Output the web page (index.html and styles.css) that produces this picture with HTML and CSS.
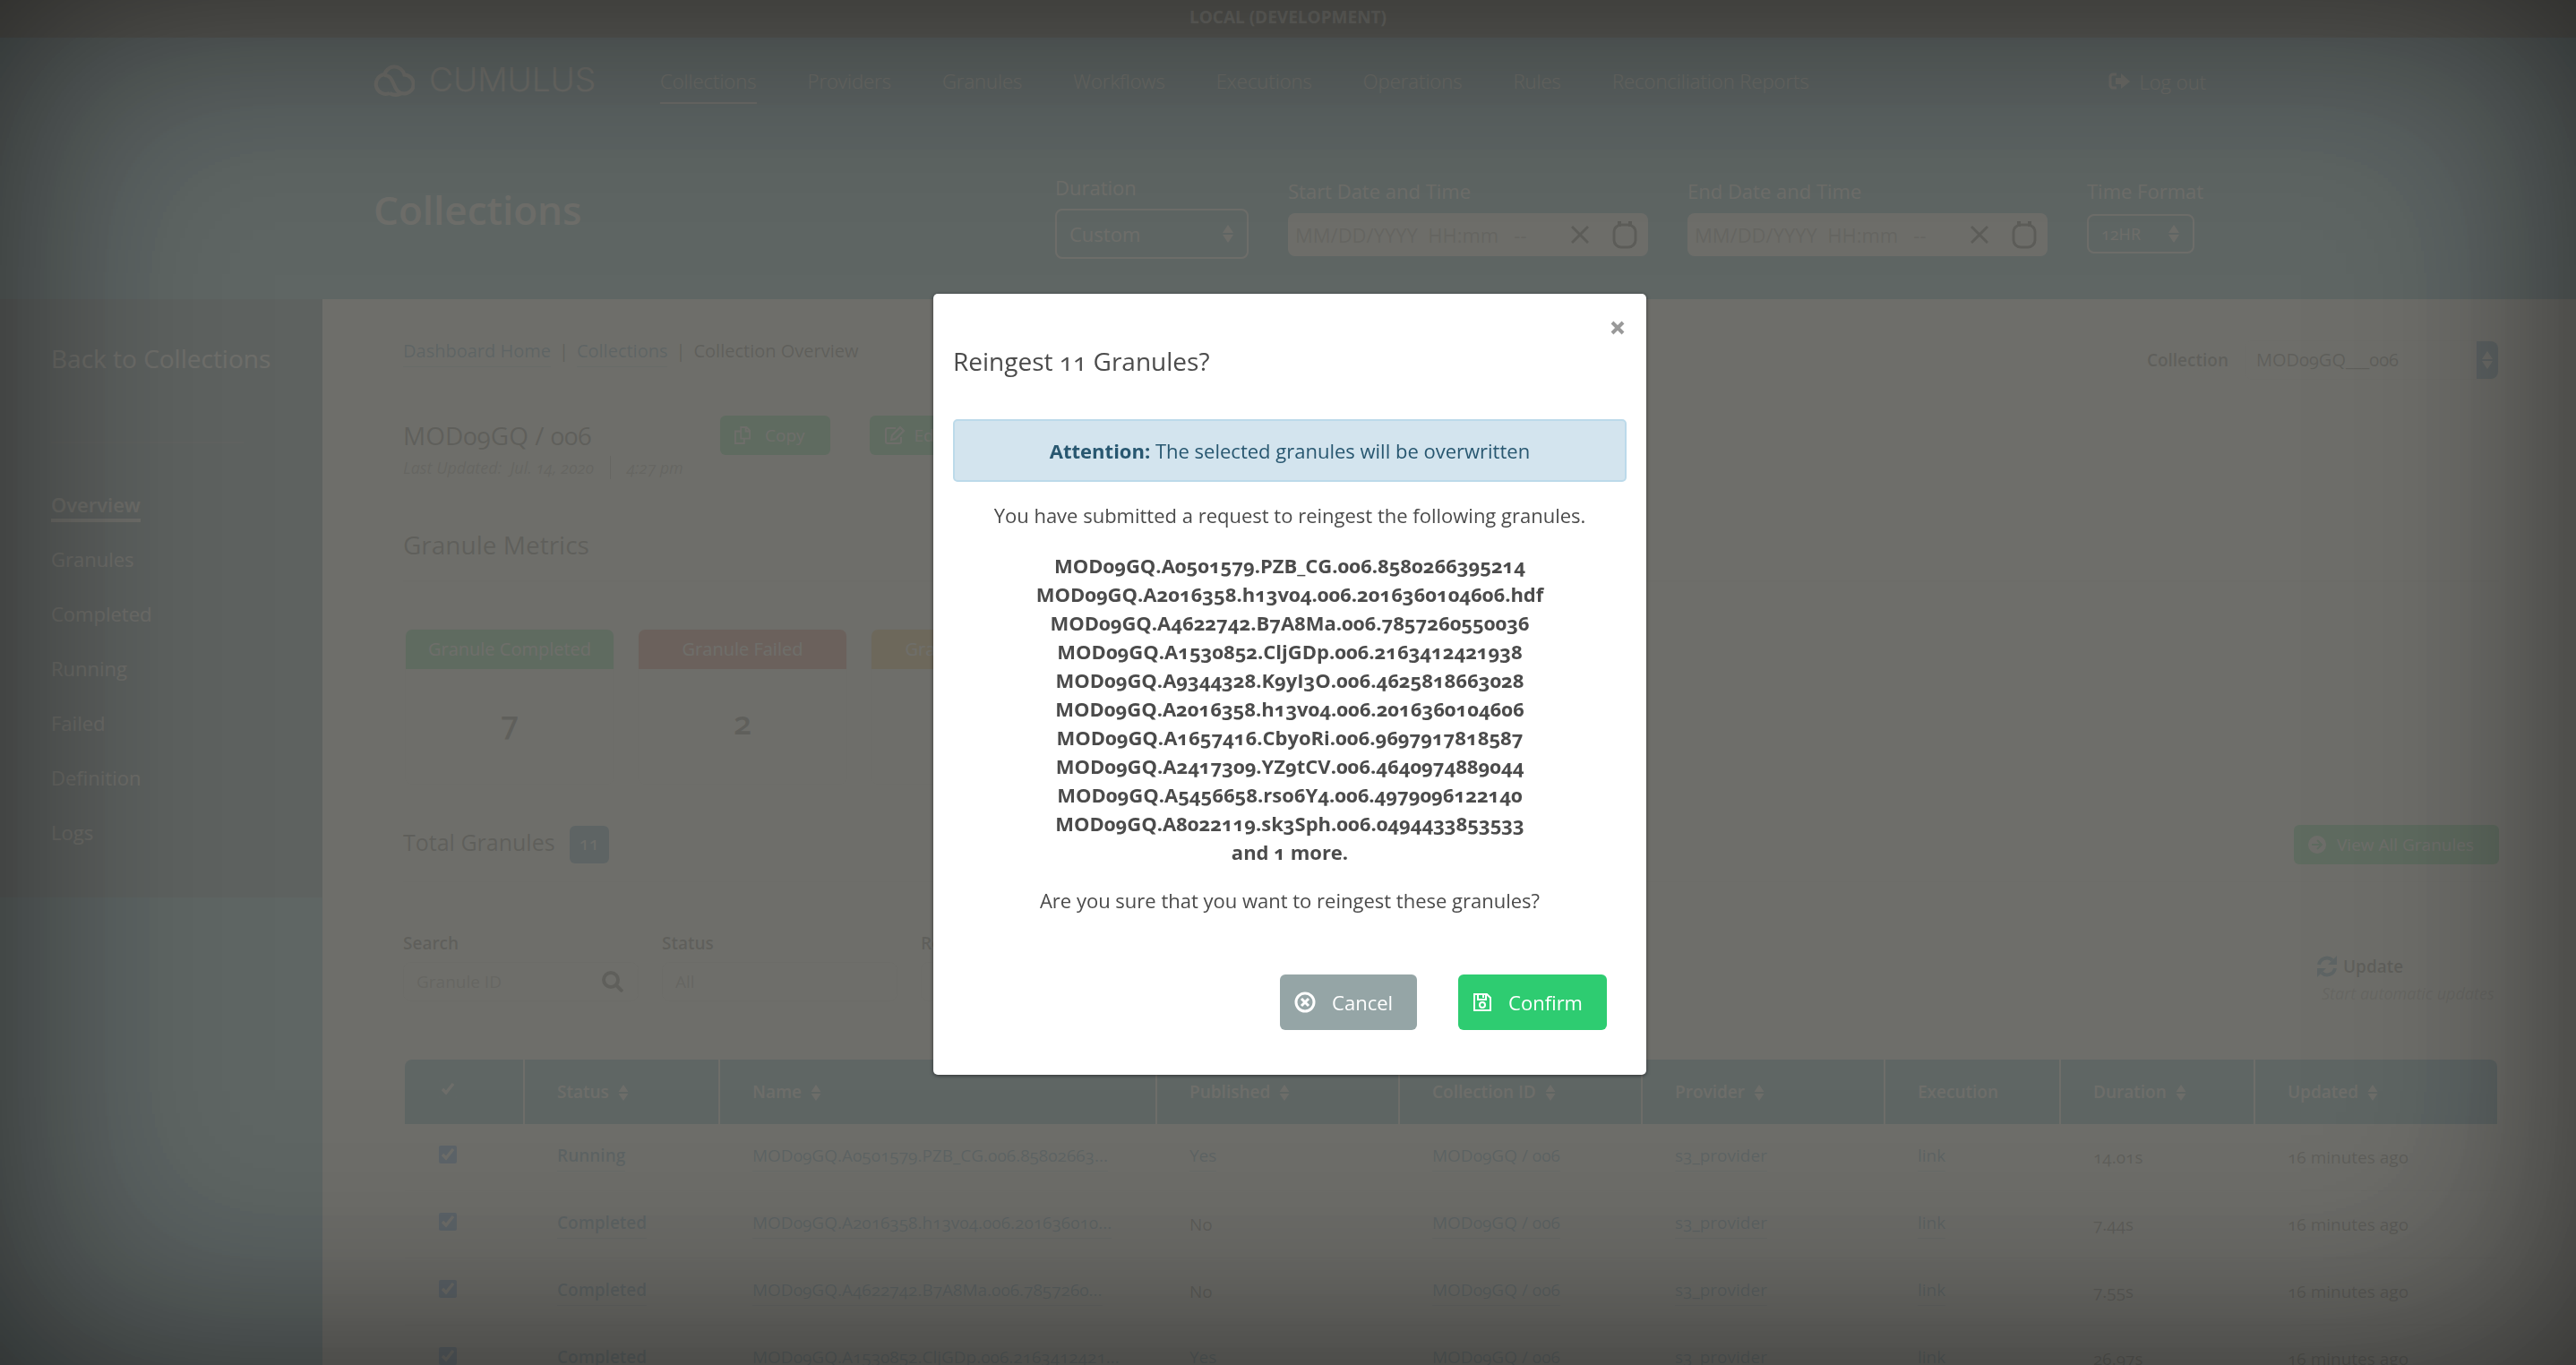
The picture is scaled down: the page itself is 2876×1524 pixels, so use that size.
FILE: index.html
```html
<!DOCTYPE html>
<html lang="en">
<head>
<meta charset="utf-8">
<title>Cumulus Dashboard</title>
<link rel="stylesheet" href="styles.css">
</head>
<body>
<svg class="sprite" aria-hidden="true">
  <symbol id="sort" viewBox="0 0 12 20"><path d="M6 0l6 9H0zM6 20l6-9H0z" fill="currentColor"/></symbol>
  <symbol id="clear" viewBox="0 0 20 20"><path d="M1 1l18 18M19 1L1 19" stroke="currentColor" stroke-width="3" fill="none"/></symbol>
  <symbol id="calendar" viewBox="0 0 28 32"><rect x="2" y="5" width="24" height="25" rx="8" fill="none" stroke="currentColor" stroke-width="3"/><path d="M6 1h4v6H6zM18 1h4v6h-4z" fill="currentColor"/></symbol>
</svg>
<div class="env">LOCAL (DEVELOPMENT)</div>
<header class="header">
  <div class="wrap">
    <div class="topnav">
      <a class="logo" href="#" aria-label="Cumulus">
        <svg width="46" height="38" viewBox="0 0 46 38" fill="none" stroke="currentColor" stroke-width="4"><path d="M12 13A11 11 0 1 0 18 34M12 14A11.500 11.500 0 0 1 34.500 13.500A10.500 10.500 0 1 1 34 34.500C20 34 25 14 12 14M18 34Q24 37.500 31 34.500"/></svg>
        <span>CUMULUS</span>
      </a>
      <nav class="nav">
        <a class="active" href="#">Collections</a><a href="#">Providers</a><a href="#">Granules</a><a href="#">Workflows</a><a href="#">Executions</a><a href="#">Operations</a><a href="#">Rules</a><a href="#">Reconciliation Reports</a>
      </nav>
      <a class="logout" href="#"><svg width="24" height="20" viewBox="0 0 24 20"><path d="M9 2H5a3 3 0 0 0-3 3v9a3 3 0 0 0 3 3h4" fill="none" stroke="currentColor" stroke-width="3"/><path d="M8 6h6V1l10 9-10 8v-5H8z" fill="currentColor"/></svg>Log out</a>
    </div>
    <div class="titlebar">
      <h1>Collections</h1>
      <form class="range">
        <label class="duration">Duration
          <span class="picker"><select><option>Custom</option></select><svg width="14" height="20"><use href="#sort"/></svg></span>
        </label>
        <div class="date"><label for="start">Start Date and Time</label>
          <span class="datebox"><input id="start" placeholder="MM/DD/YYYY  HH:mm   --"><svg width="20" height="20"><use href="#clear"/></svg><svg width="28" height="32"><use href="#calendar"/></svg></span>
        </div>
        <div class="date"><label for="end">End Date and Time</label>
          <span class="datebox"><input id="end" placeholder="MM/DD/YYYY  HH:mm   --"><svg width="20" height="20"><use href="#clear"/></svg><svg width="28" height="32"><use href="#calendar"/></svg></span>
        </div>
        <label class="format">Time Format
          <span class="picker"><select><option>12HR</option></select><svg width="14" height="20"><use href="#sort"/></svg></span>
        </label>
      </form>
    </div>
  </div>
</header>
<div class="body">
  <aside class="sidebar">
    <a class="back" href="#">Back to Collections</a>
    <hr>
    <nav>
      <a class="active" href="#">Overview</a><a href="#">Granules</a><a href="#">Completed</a><a href="#">Running</a><a href="#">Failed</a><a href="#">Definition</a><a href="#">Logs</a>
    </nav>
  </aside>
  <main class="main">
    <div class="crumbrow">
      <nav class="crumbs"><a href="#">Dashboard Home</a><i>|</i><a href="#">Collections</a><i>|</i><span>Collection Overview</span></nav>
      <div class="collection"><label for="coll">Collection</label><span class="combo"><input id="coll" value="MOD09GQ___006"><b><svg width="14" height="20"><use href="#sort"/></svg></b></span></div>
    </div>
    <div class="idrow">
      <div><h2>MOD09GQ / 006</h2><p class="updated"><span>Last Updated:&nbsp; Jul. 14, 2020</span><span>4:27 pm</span></p></div>
      <button class="btn"><svg width="18" height="20" viewBox="0 0 20 22" fill="none" stroke="currentColor" stroke-width="2"><path d="M8 1h7l4 4v10H8zM14 1v5h5M8 6H1v15h11v-6"/></svg>Copy</button>
      <button class="btn edit"><svg width="24" height="22" viewBox="0 0 24 22" fill="none" stroke="currentColor" stroke-width="2"><path d="M13 3H4a2 2 0 0 0-2 2v13a2 2 0 0 0 2 2h13a2 2 0 0 0 2-2v-5"/><path d="M9 11l9-9 4 4-9 9-5 1z"/></svg>Edit</button>
    </div>
    <h2 class="section">Granule Metrics</h2>
    <ul class="cards">
      <li class="ok"><span>Granule Completed</span><b>7</b></li>
      <li class="bad"><span>Granule Failed</span><b>2</b></li>
      <li class="run"><span>Granule Running</span><b>2</b></li>
    </ul>
    <div class="total">
      <h3>Total Granules</h3><span class="badge">11</span>
      <a class="btn" href="#"><svg width="20" height="20" viewBox="0 0 20 20"><circle cx="10" cy="10" r="10" fill="currentColor"/><path d="M4 10h11M10 5l5 5-5 5" fill="none" stroke="#2ecc71" stroke-width="2"/></svg>View All Granules</a>
    </div>
    <div class="filters">
      <label>Search<span class="box"><input placeholder="Granule ID"><svg width="24" height="24" viewBox="0 0 24 24" fill="none" stroke="currentColor" stroke-width="4"><circle cx="10" cy="10" r="8"/><path d="M15 15l8 8"/></svg></span></label>
      <label>Status<span class="box"><input placeholder="All"></span></label>
      <label>Result Limit<span class="box"><input placeholder="10"></span></label>
      <div class="refresh"><a href="#" aria-label="Update"><svg width="24" height="24" viewBox="0 0 24 24"><path d="M3 10a9 9 0 0 1 15-5M21 14a9 9 0 0 1-15 5" fill="none" stroke="currentColor" stroke-width="4"/><path d="M23 0v10H13zM1 24V14h10z" fill="currentColor"/></svg></a><span>Update</span><em>Start automatic updates</em></div>
    </div>
    <table>
      <colgroup><col class="c1"><col class="c2"><col class="c3"><col class="c4"><col class="c4"><col class="c4"><col class="c5"><col class="c6"><col></colgroup>
      <thead><tr>
        <th><input type="checkbox" checked aria-label="Select all"></th>
        <th>Status <svg width="12" height="18"><use href="#sort"/></svg></th>
        <th>Name <svg width="12" height="18"><use href="#sort"/></svg></th>
        <th>Published <svg width="12" height="18"><use href="#sort"/></svg></th>
        <th>Collection ID <svg width="12" height="18"><use href="#sort"/></svg></th>
        <th>Provider <svg width="12" height="18"><use href="#sort"/></svg></th>
        <th>Execution</th>
        <th>Duration <svg width="12" height="18"><use href="#sort"/></svg></th>
        <th>Updated <svg width="12" height="18"><use href="#sort"/></svg></th>
      </tr></thead>
      <tbody>
        <tr><td><input type="checkbox" checked aria-label="Select row"></td><td class="st"><a href="#">Running</a></td><td><a class="name" href="#">MOD09GQ.A0501579.PZB_CG.006.85802663...</a></td><td><a href="#">Yes</a></td><td><a href="#">MOD09GQ / 006</a></td><td><a href="#">s3_provider</a></td><td><a href="#">link</a></td><td>14.01s</td><td>16 minutes ago</td></tr>
        <tr><td><input type="checkbox" checked aria-label="Select row"></td><td class="st"><a href="#">Completed</a></td><td><a class="name" href="#">MOD09GQ.A2016358.h13v04.006.201636010...</a></td><td>No</td><td><a href="#">MOD09GQ / 006</a></td><td><a href="#">s3_provider</a></td><td><a href="#">link</a></td><td>7.44s</td><td>16 minutes ago</td></tr>
        <tr><td><input type="checkbox" checked aria-label="Select row"></td><td class="st"><a href="#">Completed</a></td><td><a class="name" href="#">MOD09GQ.A4622742.B7A8Ma.006.7857260...</a></td><td>No</td><td><a href="#">MOD09GQ / 006</a></td><td><a href="#">s3_provider</a></td><td><a href="#">link</a></td><td>7.55s</td><td>16 minutes ago</td></tr>
        <tr><td><input type="checkbox" checked aria-label="Select row"></td><td class="st"><a href="#">Completed</a></td><td><a class="name" href="#">MOD09GQ.A1530852.CljGDp.006.2163412421...</a></td><td><a href="#">Yes</a></td><td><a href="#">MOD09GQ / 006</a></td><td><a href="#">s3_provider</a></td><td><a href="#">link</a></td><td>26.97s</td><td>16 minutes ago</td></tr>
      </tbody>
    </table>
  </main>
</div>
<div class="backdrop">
  <div class="modal" role="dialog" aria-modal="true" aria-labelledby="title">
    <button class="close" aria-label="Close"><svg width="16" height="16" viewBox="0 0 16 16"><path d="M2 2l12 12M14 2L2 14" stroke="currentColor" stroke-width="4"/></svg></button>
    <h2 id="title">Reingest 11 Granules?</h2>
    <div class="alert"><strong>Attention:</strong> The selected granules will be overwritten</div>
    <p>You have submitted a request to reingest the following granules.</p>
    <ul class="ids">
      <li>MOD09GQ.A0501579.PZB_CG.006.8580266395214</li>
      <li>MOD09GQ.A2016358.h13v04.006.2016360104606.hdf</li>
      <li>MOD09GQ.A4622742.B7A8Ma.006.7857260550036</li>
      <li>MOD09GQ.A1530852.CljGDp.006.2163412421938</li>
      <li>MOD09GQ.A9344328.K9yI3O.006.4625818663028</li>
      <li>MOD09GQ.A2016358.h13v04.006.2016360104606</li>
      <li>MOD09GQ.A1657416.CbyoRi.006.9697917818587</li>
      <li>MOD09GQ.A2417309.YZ9tCV.006.4640974889044</li>
      <li>MOD09GQ.A5456658.rso6Y4.006.4979096122140</li>
      <li>MOD09GQ.A8022119.sk3Sph.006.0494433853533</li>
      <li>and 1 more.</li>
    </ul>
    <p>Are you sure that you want to reingest these granules?</p>
    <div class="actions">
      <button class="cancel"><svg width="24" height="24" viewBox="0 0 24 24" fill="none" stroke="currentColor" stroke-width="3"><circle cx="12" cy="12" r="10"/><path d="M8 8l8 8M16 8l-8 8"/></svg>Cancel</button>
      <button class="confirm"><svg width="22" height="22" viewBox="0 0 22 22" fill="none" stroke="currentColor" stroke-width="2"><path d="M2 2h14l4 4v14H2z"/><path d="M6 2v6h9V2M12 3v3"/><circle cx="11" cy="14" r="3"/></svg>Confirm</button>
    </div>
  </div>
</div>
</body>
</html>
```
FILE: styles.css
```css
*{box-sizing:border-box}
body{margin:0;height:100vh;overflow:hidden;background:#2a87ac;color:#333;font:20px/28px "Open Sans","Noto Sans",sans-serif;font-variant-numeric:oldstyle-nums}
h1,h2,h3,p,ul{margin:0;padding:0;font-weight:400;list-style:none}
a{color:inherit;text-decoration:none}
button,input,select{font:inherit;font-variant-numeric:inherit;color:inherit;border:0;background:none;padding:0;margin:0;border-radius:0;outline:0}
input{width:100%;min-width:0}
svg{flex:none}
.sprite{display:none}
.env{background:#000;color:#fff;height:42px;line-height:38px;text-align:center;font-size:19px;font-weight:700}
.header{background:#2a87ac;color:#fff;height:292px}
.wrap{width:2050px;max-width:calc(100% - 96px);margin:0 auto;padding:26px 0 0 4px}
.topnav{display:flex;align-items:center;font-size:22px;height:46px}
.logo{display:flex;align-items:center;gap:16px;width:320px;padding-bottom:4px;font:300 37px/40px Inter,sans-serif}
.nav{display:flex;gap:57px;font-weight:300}
.nav a{border-bottom:2px solid transparent;line-height:44px;padding:2px 0}
.nav .active{border-color:#fff}
.logout{margin-left:auto;display:flex;align-items:center;gap:10px;font-weight:300}
.titlebar{display:flex;align-items:flex-start;justify-content:space-between;padding-top:76px}
h1{font-size:44px;line-height:88px;font-weight:600}
.range{display:flex;align-items:flex-start;gap:44px;font-size:22px;padding-top:1px}
.range label{display:block;line-height:36px}
.duration{width:216px}
.date{width:402px;padding-top:4px}
.format{width:133px;padding-top:4px}
.picker{display:flex;align-items:center;width:100%;height:56px;border:2px solid #fff;border-radius:8px;padding:0 14px;margin-top:6px}
.picker select{flex:1;appearance:none;min-width:0}
.format .picker{width:120px;height:44px;font-size:18px;margin-top:8px}
.datebox{display:flex;align-items:center;height:48px;margin-top:7px;border-radius:8px;background:#fff;color:#111;padding:0 12px 0 8px;gap:26px}
.datebox input::placeholder{color:#888;white-space:pre}
.body{display:flex;align-items:flex-start}
.sidebar{width:360px;height:668px;padding:46px 56px 46px 57px;background:#285678;color:#fff;font-size:22px}
.back{font-size:28px;line-height:40px;white-space:nowrap}
.sidebar hr{border:0;height:2px;background:#44687e;margin:73px 32px 52px 0}
.sidebar nav{display:flex;flex-direction:column;align-items:flex-start;gap:25px}
.sidebar nav a{line-height:32px;border-bottom:4px solid transparent}
.sidebar nav .active{font-weight:600;border-color:#fff}
.main{flex:1;min-width:0;min-height:1400px;background:#fff;padding:40px 86px 0 90px}
.crumbrow{display:flex;justify-content:space-between;height:70px}
.crumbs{display:flex;gap:9px;padding-top:4px}
.crumbs i{font-style:normal}
.crumbs a,td a{color:#2276ac;border-bottom:1px solid #aaccdd;height:32px}
.collection{display:flex;align-items:center;gap:18px;height:56px}
.collection label,.filters label{font-weight:600;font-size:19px}
.combo{display:flex;width:284px;height:44px;border:1px solid #eee;border-radius:8px}
.combo input{padding:0 12px}
.combo b{width:24px;flex:none;background:#2276ac;color:#fff;border-radius:0 8px 8px 0;display:grid;place-items:center}
.idrow{display:flex;align-items:flex-start;gap:44px;padding-top:20px;height:144px}
.idrow div{width:310px}
.idrow h2,.section{font-size:28px;line-height:40px}
.idrow h2{padding-top:2px}
.updated{display:flex;font-size:18px;line-height:26px;font-style:italic;color:#888;padding-top:3px;white-space:nowrap}
.updated span+span{margin-left:18px;padding-left:18px;border-left:1px solid #888}
.btn{display:flex;align-items:center;gap:16px;height:44px;background:#2ecc71;color:#fff;border-radius:6px;padding:0 28px 0 16px;font-size:19px}
.edit{gap:10px}
.section{padding-bottom:20px;border-bottom:1px solid #ddd;height:61px}
.cards{display:flex;gap:26px;padding:53px 2px 0;height:234px}
.cards li{width:234px;height:174px;border:1px solid #eee;border-radius:8px;text-align:center;overflow:hidden}
.cards span{display:block;line-height:44px;color:#fff}
.cards b{display:block;font-size:36px;line-height:120px;font-weight:600}
.ok span{background:#2ecc71}.bad span{background:#d64b3b}.run span{background:#f0ad2e}
.total{display:flex;align-items:center;gap:16px;height:102px;border-bottom:1px solid #ddd;padding-top:18px}
h3{font-size:25px;padding-bottom:5px}
.badge{width:44px;height:42px;line-height:40px;border-radius:6px;background:#2276ac;color:#fff;text-align:center}
.total .btn{margin-left:auto;gap:12px}
.filters{display:flex;gap:26px;height:198px;padding:54px 4px 0 0}
.filters label{display:block;width:263px}
.box{display:flex;align-items:center;height:44px;border:1px solid #e4e4e4;border-radius:8px;margin-top:7px;padding:0 16px 0 14px;font-weight:400}
.box input::placeholder{color:#888}
.refresh{margin-left:auto;display:grid;grid-template-columns:24px 170px;column-gap:6px;align-content:start;padding-top:24px;align-items:center}
.refresh a{color:#2276ac;height:24px}
.refresh span{font-weight:600;font-size:19px;line-height:32px}
.refresh em{grid-column:1/3;font-size:18px;color:#999;padding-left:6px;white-space:nowrap}
table{margin-left:2px;width:calc(100% - 4px);table-layout:fixed;border-collapse:separate;border-spacing:0;font-size:19px}
.c1{width:132px}.c2{width:218px}.c3{width:488px}.c4{width:271px}.c5{width:196px}.c6{width:217px}
th{height:72px;background:#2a87ac;color:#fff;text-align:left;font-weight:600;padding:0 0 0 36px;border-left:2px solid #fff}
th:first-child{border-left:0;border-radius:8px 0 0;padding-left:38px}
th:last-child{border-radius:0 8px 0 0}
th svg{vertical-align:-3px;margin-left:5px}
td{height:75px;padding:0 0 0 38px;border-bottom:1px solid #ddd}
td a{display:inline-block}
td .name{white-space:nowrap}
.st{font-weight:600}
input[type=checkbox]{width:20px;height:20px;display:block;accent-color:#1a73e8;margin-bottom:6px}
th input[type=checkbox]{accent-color:#2a87ac}
.backdrop{position:fixed;inset:0;display:flex;justify-content:center;align-items:flex-start;padding:328px 0 0 4px;background:rgba(99,99,95,.93);box-shadow:inset 0 0 300px rgba(0,0,0,.6)}
.modal{position:relative;width:796px;min-height:872px;background:#fff;color:#4b4b4b;border-radius:5px;padding:55px 22px 50px;font-size:22px;line-height:32px;text-align:center;box-shadow:0 1px 4px rgba(0,0,0,.5)}
.close{position:absolute;top:30px;right:24px;width:16px;height:16px;color:#999;line-height:0}
.modal h2{font-size:28px;line-height:40px;text-align:left}
.alert{margin:45px 0 21px;padding:18px;border:2px solid #bcdaea;border-radius:5px;background:#d3e4ee;color:#285770}
.alert,.alert strong{line-height:30px}
.ids{margin:24px 0 22px;font-weight:700}
.actions{display:flex;justify-content:flex-end;gap:46px;padding:67px 22px 0 0}
.actions button{display:flex;align-items:center;gap:18px;height:62px;border-radius:6px;color:#fff;padding:0 27px 0 16px}
.cancel{background:#95a5a6}
.confirm{background:#2ecc71}
```
